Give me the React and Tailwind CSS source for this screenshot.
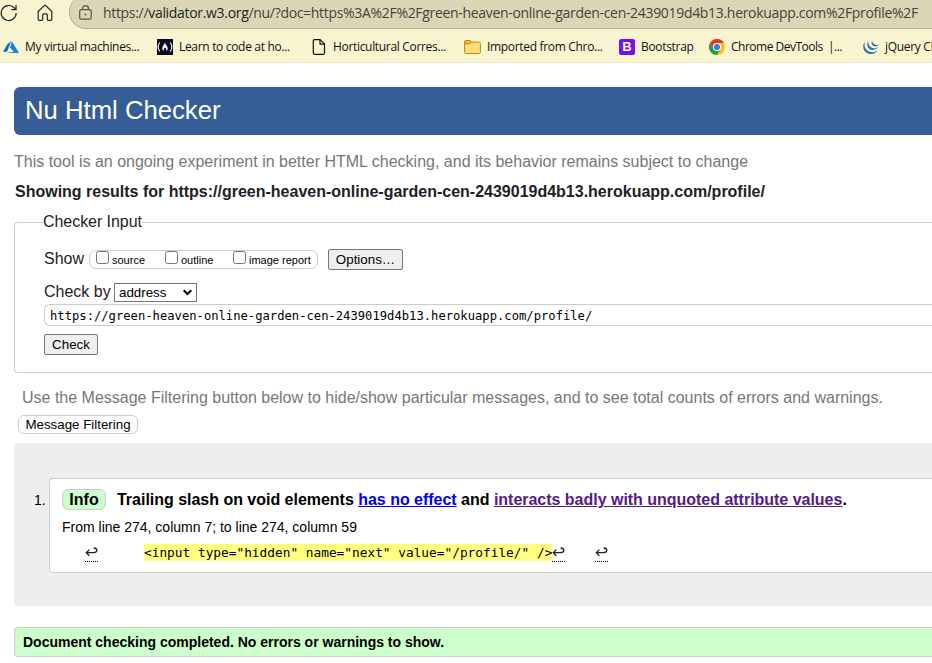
import React from "react";

function Azure() {
  return (
    <svg width="16" height="16" viewBox="0 0 16 16">
      <path d="M8.400 1.800 4.200 5.400 0 12.800h4z" fill="#0b6cc4" />
      <path d="M9 2.600 6.900 8.500l3.900 4.200L3.400 14H16z" fill="#1484dc" />
    </svg>
  );
}

function FreeCodeCamp() {
  return (
    <svg width="16" height="16" viewBox="0 0 16 16" fill="none" stroke="#fff">
      <rect width="16" height="16" fill="#0a0a23" stroke="none" />
      <path d="M2.800 3.500C.8 6.200.8 9.800 2.800 12.500M13.200 3.500c2 2.700 2 6.300 0 9" strokeWidth="1.100" />
      <path d="M7.800 3.500c.4 2.300 2.900 3.300 2.900 5.900 0 1.100-.5 1.900-1.300 2.600.2-1.500-.5-2.700-1.400-3.400-.9.700-1.600 1.900-1.400 3.400-.8-.7-1.300-1.500-1.300-2.600C5.300 7.300 7.200 6 7.800 3.500z" fill="#fff" stroke="none" />
    </svg>
  );
}

function Page() {
  return (
    <svg width="14" height="16" viewBox="0 0 14 16" fill="none" stroke="#111" strokeWidth="1.200" strokeLinejoin="round">
      <path d="M2.500.6h5.700l4.300 4.300v9.200c0 .8-.4 1.200-1.200 1.200H2.500c-.8 0-1.200-.4-1.200-1.200V1.800C1.300 1 1.700.6 2.500.6z" />
      <path d="M8 .8v4.300h4.300" />
    </svg>
  );
}

function Folder() {
  return (
    <svg width="17" height="16" viewBox="0 0 17 16" stroke="#b8860b">
      <path d="M.6 3c0-1 .6-1.500 1.500-1.500h3.500l1.800 1.600h7.400c1 0 1.600.6 1.600 1.600v8.200c0 1-.6 1.600-1.600 1.600H2.200c-1 0-1.600-.6-1.600-1.600z" fill="#ffdc7c" />
      <path d="M.6 3c0-1 .6-1.500 1.500-1.500h3.500l1.800 1.600-1.700 1.700H.6z" fill="#f5bf2c" />
    </svg>
  );
}

function Chrome() {
  return (
    <svg width="16" height="16" viewBox="0 0 16 16">
      <circle cx="8" cy="8" r="8" fill="#fbc116" />
      <path d="M1.070 4A8 8 0 0 1 14.930 4H8a4 4 0 0 0-3.460 6z" fill="#e33b2e" />
      <path d="M1.070 4A8 8 0 0 0 8 16l3.460-6A4 4 0 0 1 4.540 10z" fill="#229a4b" />
      <circle cx="8" cy="8" r="4" fill="#fff" />
      <circle cx="8" cy="8" r="3.100" fill="#3b7ded" />
    </svg>
  );
}

function JQuery() {
  return (
    <svg width="16" height="16" viewBox="0 0 16 16" fill="#1b6aad">
      <path d="M1.900 2.800C-.9 6.800-.1 12.300 4.500 14.300c4 1.600 8.200.1 10.300-3.300-2.500 2.400-6.300 3-9.200 1.500C2 10.600.7 6.800 1.900 2.800z" />
      <path d="M5.300 1.700C3.500 4.600 4.100 8.900 7.600 10.400c3 1.200 6.200.2 7.600-2.300-1.900 1.500-4.400 1.800-6.500.7C6 7.400 4.700 4.700 5.300 1.700z" />
      <path d="M9.200 1.200C8 3.200 8.400 5.900 10.800 6.900c1.900.8 4 .3 4.900-1.500-1.300.9-2.700.9-4 .2C9.900 4.700 8.900 3.200 9.200 1.200z" />
    </svg>
  );
}

function Return() {
  return (
    <span className="flex h-[18px] w-[13px] justify-center border-b border-dotted border-black pt-[3px]">
      <svg width="13" height="10" viewBox="0 0 13 10" fill="none" stroke="#222" strokeWidth="1.300">
        <path d="M8.600 1c2.200 0 3.200.8 3.200 2.300 0 1.500-1 2.400-3.200 2.400H1.400M4.400 2.600 1.300 5.700l3.100 3" />
      </svg>
    </span>
  );
}

function Bookmark({ icon, width, children }) {
  return (
    <div className={"flex shrink-0 items-center whitespace-nowrap " + width}>
      {icon}
      <span className="tracking-[-0.32px]">{children}</span>
    </div>
  );
}

function Check({ children, width }) {
  return (
    <label className={"flex shrink-0 gap-[3px] " + width}>
      <input type="checkbox" className="h-[13px] w-[13px] shrink-0" />
      <span className="mt-[3px] text-[11px] leading-[13px] text-black">{children}</span>
    </label>
  );
}

export default function App() {
  return (
    <div className="h-[663px] w-[932px] overflow-hidden bg-white font-['Liberation_Sans',Arial,sans-serif] text-black">
      <header className="h-[63px] border-b border-[#e9e5c3] bg-[#f8f4d0] font-['Open_Sans',sans-serif]">
        <div className="flex h-[29px]">
          <svg className="mt-[4px] shrink-0" width="18" height="18" viewBox="0 0 18 18" fill="none" stroke="#222" strokeWidth="1.200">
            <path d="M16.200 9A7.500 7.500 0 1 1 13.800 3.500L15.900 5.600" />
            <path d="M16 1v4.700h-4.700" />
          </svg>
          <svg className="ml-[19px] mt-[4px] shrink-0" width="16" height="18" viewBox="0 0 16 18" fill="none" stroke="#222" strokeWidth="1.200" strokeLinejoin="round">
            <path d="M1.200 7.500 7.300 1.600c.5-.5 1-.5 1.500 0l6 5.900v7.700c0 .8-.4 1.200-1.200 1.200h-2.200c-.7 0-1.100-.4-1.100-1.100V11c0-.7-.4-1.100-1.100-1.100H6.800c-.7 0-1.100.4-1.100 1.100v4.300c0 .7-.4 1.100-1.100 1.100H2.400c-.8 0-1.200-.4-1.200-1.200z" />
          </svg>
          <div className="-mt-[5px] ml-[16px] flex h-[34px] flex-1 rounded-l-full border-b border-l border-[#b5b095] bg-[#dad6b6] pt-[5px]">
            <svg className="ml-[9px] mt-[5px] shrink-0" width="13" height="16" viewBox="0 0 13 16" fill="none" stroke="#55534a" strokeWidth="1.200">
              <rect x=".7" y="4.700" width="11.500" height="9.400" rx="1.600" />
              <path d="M3.600 4.700V3.400C3.600 1.800 4.800.7 6.500.7s2.900 1.100 2.900 2.700v1.300" />
              <circle cx="6.500" cy="9.400" r="1" fill="#55534a" stroke="none" />
            </svg>
            <div className="ml-[11px] whitespace-nowrap text-[14px] leading-[26px] tracking-[-0.315px] text-[#45443b]">
              https://<span className="text-[#25241f]">validator.w3.org</span>/nu/?doc=https%3A%2F%2Fgreen-heaven-online-garden-cen-2439019d4b13.herokuapp.com%2Fprofile%2F
            </div>
          </div>
        </div>
        <div className="flex h-[34px] items-center pl-[3px] pt-[1px] text-[12px] leading-[16px] text-[#111]">
          <Bookmark width="w-[154px] gap-[6px]" icon={<Azure />}>My virtual machines...</Bookmark>
          <Bookmark width="w-[155px] gap-[6px]" icon={<FreeCodeCamp />}>Learn to code at ho...</Bookmark>
          <Bookmark width="w-[152px] gap-[7px]" icon={<Page />}>Horticultural Corres...</Bookmark>
          <Bookmark width="w-[155px] gap-[6px]" icon={<Folder />}>Imported from Chro...</Bookmark>
          <Bookmark width="w-[90px] gap-[6px]" icon={<span className="flex h-4 w-4 items-center justify-center rounded-[2px] bg-[#7510f5] font-['Liberation_Sans'] text-[13px] font-bold text-white">B</span>}>Bootstrap</Bookmark>
          <Bookmark width="w-[154px] gap-[6px]" icon={<Chrome />}><span className="tracking-[-0.5px]">Chrome DevTools&nbsp; |...</span></Bookmark>
          <Bookmark width="w-[154px] gap-[6px]" icon={<JQuery />}>jQuery CDN</Bookmark>
        </div>
      </header>

      <main className="pl-[14px]">
        <h1 className="mt-[24px] h-[48px] rounded-l-[6px] bg-[#365d96] pl-[11px] text-[25.700px] leading-[46px] text-white">Nu Html Checker</h1>
        <p className="mt-[17px] text-[16px] leading-[20px] text-[#777]">This tool is an ongoing experiment in better HTML checking, and its behavior remains subject to change</p>
        <h2 className="mt-[10px] pl-px text-[16px] font-bold leading-[20px] tracking-[-0.005px] text-[#1f2126]">Showing results for https://green-heaven-online-garden-cen-2439019d4b13.herokuapp.com/profile/</h2>

        <fieldset className="mt-[10px] h-[161px] rounded-l-[4px] border border-r-0 border-[#ccc] pl-[29px] text-[16px] text-[#1f2126]">
          <legend className="-ml-px h-[20px] leading-[20px] tracking-[-0.05px]">Checker Input</legend>
          <div className="mt-[17px] flex h-[22px]">
            <span className="w-[45px] leading-[20px]">Show</span>
            <div className="mt-[1px] flex h-[19px] w-[229px] rounded-[7px] border border-[#ccc] pl-[6px]">
              <Check width="w-[69px]">source</Check>
              <Check width="w-[68px]">outline</Check>
              <Check width="w-[84px]">image report</Check>
            </div>
            <button className="ml-[10px] h-[21px] w-[75px] rounded-[2px] border border-[#767676] bg-[#efefef] text-[13.333px] leading-[18px] text-black">Options…</button>
          </div>
          <div className="mt-[12px] flex h-[20px]">
            <span className="w-[70px] leading-[17px]">Check by</span>
            <div className="flex h-[19px] w-[83px] items-center justify-between border border-[#767676] bg-white pl-[4px] pr-[4px] text-[13.333px] text-black">
              address
              <svg width="9" height="7" viewBox="0 0 9 7" fill="none" stroke="#000" strokeWidth="2"><path d="m.7 1.200 3.800 3.800L8.300 1.200" /></svg>
            </div>
          </div>
          <div className="mt-[1px] h-[22px] whitespace-nowrap rounded-l-[6px] border border-r-0 border-[#ccc] pl-[5px] font-['DejaVu_Sans_Mono',monospace] text-[12.180px] leading-[22px] text-black">https://green-heaven-online-garden-cen-2439019d4b13.herokuapp.com/profile/</div>
          <button className="mt-[8px] block h-[21px] w-[54px] rounded-[2px] border border-[#767676] bg-[#efefef] text-[13.333px] leading-[18px] text-black">Check</button>
        </fieldset>

        <p className="mt-[15px] pl-[8px] text-[16px] leading-[20px] text-[#777]">Use the Message Filtering button below to hide/show particular messages, and to see total counts of errors and warnings.</p>
        <button className="ml-[4px] mt-[7px] block h-[19px] w-[120px] rounded-[6px] border border-[#ccc] bg-white text-[13.333px] leading-[17px] text-black">Message Filtering</button>

        <section className="mt-[9px] flex h-[163px] rounded-l-[4px] bg-[#eee] pt-[35px]">
          <span className="w-[35px] pl-[20px] pt-[14px] text-[14px] leading-[16px]">1.</span>
          <article className="h-[95px] flex-1 rounded-l-[4px] border border-r-0 border-[#ccc] bg-white pl-[12px] pt-[10px]">
            <div className="flex h-[21px] whitespace-nowrap text-[16px] font-bold leading-[20px]">
              <span className="mr-[11px] h-[21px] w-[44px] rounded-[6px] border border-[#ccc] bg-[#cfc] text-center leading-[19px]">Info</span>
              <p className="leading-[21px] tracking-[-0.02px]">Trailing slash on void elements <a className="text-[#00e] underline">has no effect</a> and <a className="text-[#551a8b] underline">interacts badly with unquoted attribute values</a>.</p>
            </div>
            <p className="mt-[9px] text-[14px] leading-[16px]">From line 274, column 7; to line 274, column 59</p>
            <div className="mt-[9px] flex h-[18px] pl-[23px] font-['DejaVu_Sans_Mono',monospace] text-[12.800px] leading-[17px]">
              <Return />
              <span className="ml-[46px] h-[17px] w-[408px] whitespace-pre bg-[#ffff80]">{'<input type="hidden" name="next" value="/profile/" />'}</span>
              <Return />
              <span className="w-[30px]" />
              <Return />
            </div>
          </article>
        </section>

        <p className="mt-[21px] h-[30px] rounded-l-[4px] border border-r-0 border-[#ccc] bg-[#cfc] pl-[8px] text-[14px] font-bold leading-[29px]">Document checking completed. No errors or warnings to show.</p>
      </main>
    </div>
  );
}
